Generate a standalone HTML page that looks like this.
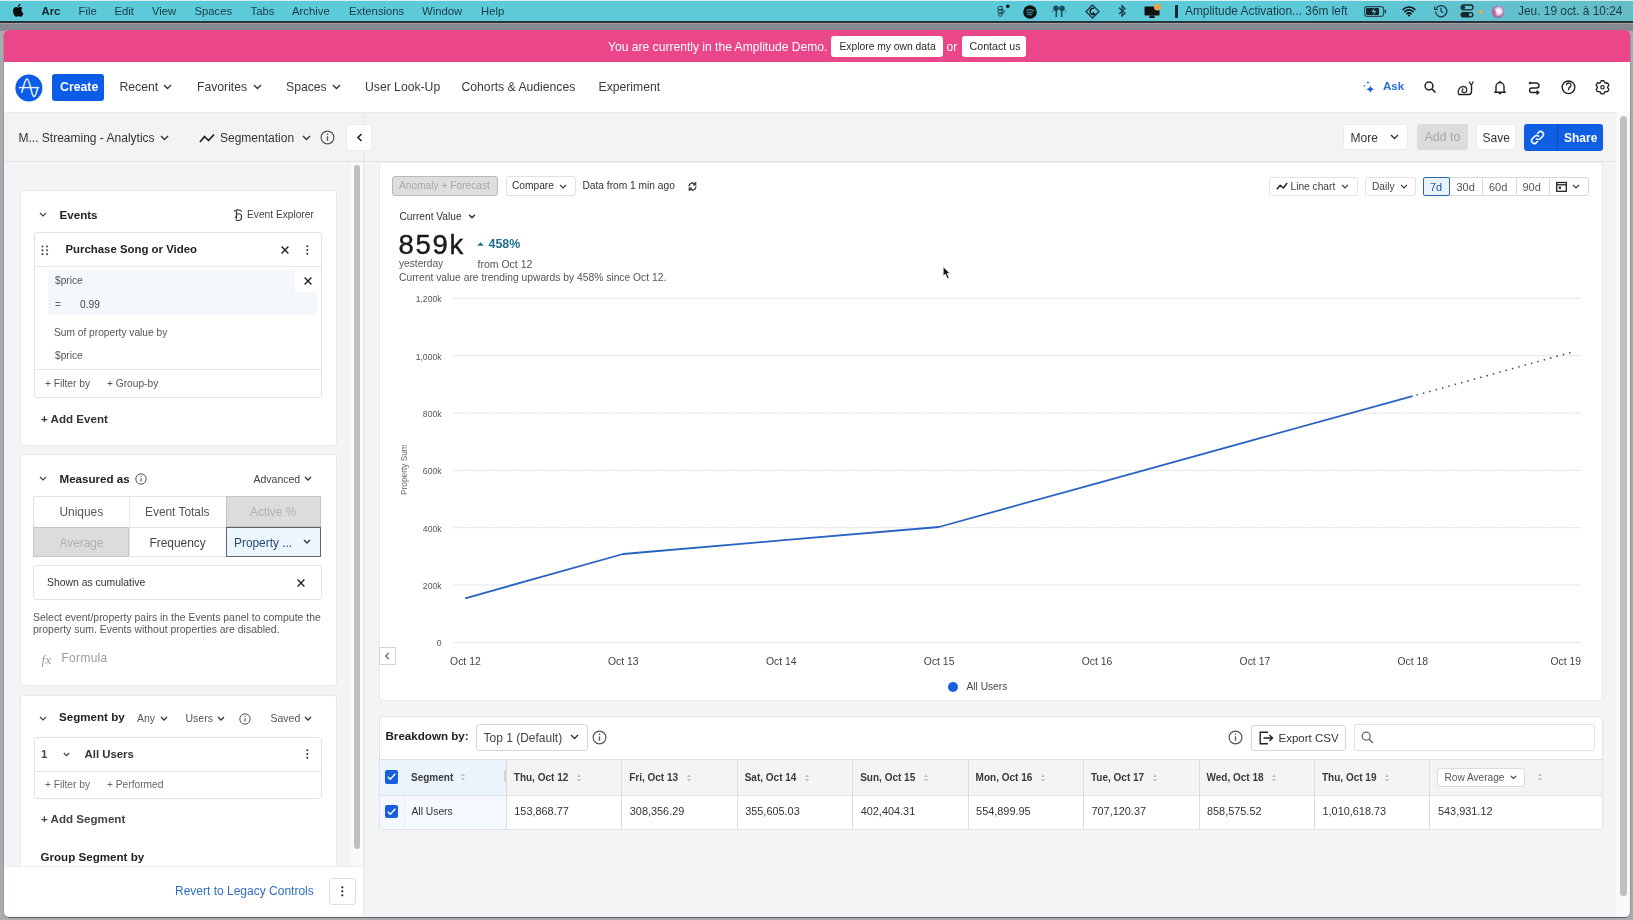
<!DOCTYPE html>
<html><head><meta charset="utf-8">
<style>
*{box-sizing:border-box;margin:0;padding:0}
html,body{will-change:transform;width:1633px;height:920px;overflow:hidden;background:#98989c;font-family:"Liberation Sans",sans-serif;color:#303030}
.a{position:absolute;white-space:nowrap;line-height:1}
svg{position:absolute;overflow:visible}
.mb{position:absolute;top:5px;font-size:11.3px;color:#1b3a45;line-height:12px;white-space:nowrap}
.nv{position:absolute;top:81px;font-size:12.2px;color:#3a3a3a;line-height:12px;white-space:nowrap}
.card{position:absolute;background:#fff;border:1px solid #e3e3e6;border-radius:3px}
.box{position:absolute;background:#fff;border:1px solid #dedee2;border-radius:3px}
.t10{font-size:10.2px;line-height:10px}
.t12{font-size:12px;line-height:12px}
</style></head><body>
<!-- menubar -->
<div style="position:absolute;left:0;top:0;width:1633px;height:22px;background:#5ccad9"></div>
<div style="position:absolute;left:0;top:0;width:1633px;height:1px;background:#d8eef1"></div><div style="position:absolute;left:1300px;top:1px;width:333px;height:20px;background:linear-gradient(90deg,rgba(102,188,197,0),#66bcc5)"></div>
<div style="position:absolute;left:0;top:21px;width:1633px;height:2px;background:#2a3438"></div>
<svg style="left:13px;top:4px" width="11" height="14" viewBox="0 0 13 16.5"><path fill="#0d0d0d" d="M10.6 8c0-1.9 1.6-2.8 1.6-2.8-.9-1.3-2.3-1.5-2.8-1.5-1.2-.1-2.3.7-2.9.7-.6 0-1.5-.7-2.5-.7C2.7 3.7 1.4 4.500 .7 5.800-.8 8.400.3 12.300 1.700 14.300c.7 1 1.500 2.100 2.600 2 1-.1 1.400-.7 2.700-.7 1.200 0 1.600.7 2.700.7 1.100 0 1.800-1 2.500-2 .8-1.100 1.100-2.200 1.100-2.300 0 0-2.100-.8-2.200-3.300zM8.600 2.400c.6-.7 1-1.600.9-2.600-.8 0-1.800.6-2.400 1.300-.5.600-1 1.600-.9 2.500.9.100 1.800-.4 2.400-1.200z" transform="scale(.93)"/></svg>
<div class="mb" style="left:41.5px;font-weight:bold;color:#15262c">Arc</div>
<div class="mb" style="left:78.5px">File</div>
<div class="mb" style="left:114.5px">Edit</div>
<div class="mb" style="left:152px">View</div>
<div class="mb" style="left:194.5px">Spaces</div>
<div class="mb" style="left:250.5px">Tabs</div>
<div class="mb" style="left:292px">Archive</div>
<div class="mb" style="left:349px">Extensions</div>
<div class="mb" style="left:422px">Window</div>
<div class="mb" style="left:481px">Help</div>
<!-- status icons -->
<svg style="left:997px;top:4px" width="14" height="14" viewBox="0 0 14 14"><path d="M2.500 2.500h2.500v3.300H2.500a1.650 1.650 0 0 1 0-3.300zM2.500 5.800h2.500v3.300H2.500a1.650 1.650 0 0 1 0-3.300zM2.500 9.100h2.500v1.700a1.700 1.700 0 1 1-2.500-1.700z" fill="none" stroke="#1b3a45" stroke-width="1"/><path d="M5 5.800h.7a1.650 1.650 0 0 1 0 3.300H5" fill="none" stroke="#1b3a45" stroke-width="1"/><circle cx="10.800" cy="2.300" r="1.700" fill="#0a0a0a"/></svg>
<svg style="left:1022.500px;top:4.500px" width="15" height="15" viewBox="0 0 15 15"><circle cx="7" cy="7" r="6.800" fill="#0d1114"/><path d="M3.300 5.200c2.500-.8 5.200-.6 7.800.7M3.700 7.500c2-.6 4.200-.4 6.200.5M4.200 9.700c1.600-.4 3.200-.3 4.600.4" stroke="#3f8a98" stroke-width="1.300" fill="none"/></svg>
<svg style="left:1050px;top:4px" width="18" height="14" viewBox="0 0 18 14"><circle cx="6" cy="4.200" r="2.800" fill="#1b4e5c"/><circle cx="12" cy="4.200" r="2.800" fill="#1b4e5c"/><path d="M6.300 6v7M11.700 6v7" stroke="#1b4e5c" stroke-width="1.600"/><path d="M3.300 5.500L1 7.200l2.300 1M14.700 5.500L17 7.200l-2.300 1" fill="#4a8e9c"/></svg>
<svg style="left:1085px;top:4px" width="15" height="15" viewBox="0 0 15 15"><path d="M7.500 1L14 7.500 7.500 14 1 7.500z" fill="none" stroke="#1b3a45" stroke-width="1.300"/><path d="M9.300 4.300A3.200 3.200 0 1 0 9.600 10.300L8 8.500" fill="none" stroke="#0a0a0a" stroke-width="1.400"/></svg>
<svg style="left:1117px;top:4px" width="10" height="14" viewBox="0 0 10 14"><path d="M2 3.800l6 5.500-3 2.800V1.800l3 2.800-6 5.500" fill="none" stroke="#1b3a45" stroke-width="1.3"/></svg>
<svg style="left:1144px;top:3px" width="18" height="16" viewBox="0 0 18 16"><rect x="0.5" y="3.5" width="15" height="9" rx="1" fill="#111"/><path d="M6 12.500h4l1 2.500H5z" fill="#111"/><circle cx="13.500" cy="4" r="3.600" fill="#e6a64b"/></svg>
<div style="position:absolute;left:1175px;top:5px;width:3px;height:13px;background:#15262c;border-radius:1px"></div>
<div class="mb" style="left:1185px;font-size:11.9px">Amplitude Activation... 36m left</div>
<svg style="left:1364px;top:6px" width="23" height="11" viewBox="0 0 23 11"><rect x="0.600" y="0.600" width="19" height="9.800" rx="2.500" fill="none" stroke="#2a4a55" stroke-width="1.100"/><rect x="2" y="2" width="13" height="7" rx="1" fill="#15262c"/><rect x="20.500" y="3.500" width="1.600" height="4" rx=".8" fill="#2a4a55"/><path d="M10.500 1.800L7.500 6H10L9 9.500 12.500 5H10z" fill="#5ab8c4"/></svg>
<svg style="left:1402px;top:5px" width="14" height="12" viewBox="0 0 14 12"><path d="M1 4.500a8.500 8.500 0 0 1 12 0M3 6.700a5.500 5.500 0 0 1 8 0M5 8.800a2.700 2.700 0 0 1 4 0" fill="none" stroke="#101418" stroke-width="1.700" stroke-linecap="round"/><circle cx="7" cy="10.500" r="1.100" fill="#101418"/></svg>
<svg style="left:1434px;top:4px" width="14" height="14" viewBox="0 0 14 14"><path d="M2.300 4.500A5.600 5.600 0 1 1 1.600 7.500" fill="none" stroke="#1b3a45" stroke-width="1.300"/><path d="M.800 2.500v3h3" fill="none" stroke="#1b3a45" stroke-width="1.200"/><path d="M7 3.800V7.300l2.200 1.500" fill="none" stroke="#1b3a45" stroke-width="1.200"/></svg>
<svg style="left:1460px;top:4px" width="14" height="14" viewBox="0 0 14 14"><rect x="1" y="1" width="12" height="4.800" rx="2.400" fill="none" stroke="#15262c" stroke-width="1.300"/><circle cx="3.500" cy="3.400" r="1.600" fill="#15262c"/><rect x="0.500" y="8" width="13" height="5.500" rx="2.700" fill="#15262c"/><circle cx="10.500" cy="10.700" r="1.700" fill="#5ab8c4"/></svg>
<div style="position:absolute;left:1479px;top:10px;width:4px;height:4px;border-radius:2px;background:#e9a95a"></div>
<svg style="left:1490.500px;top:4.500px" width="14" height="14" viewBox="0 0 14 14"><defs><radialGradient id="sg" cx=".55" cy=".45" r=".6"><stop offset="0" stop-color="#ffffff"/><stop offset=".35" stop-color="#e8e8f8"/><stop offset=".7" stop-color="#c070b0"/><stop offset="1" stop-color="#4a78b8"/></radialGradient></defs><circle cx="7" cy="6.800" r="6.300" fill="url(#sg)"/><path d="M1.500 5q2-1 3.500 1.500T3 11" fill="#e0509a" opacity=".8"/></svg>
<div class="mb" style="left:1518px;font-size:11.9px">Jeu. 19 oct. à 10:24</div>
<style>
.xl{top:657.3px;font-size:10.4px;color:#444;line-height:10px}
.yl{font-size:8.6px;color:#555;line-height:8px}
.th{position:absolute;top:772.5px;display:flex;align-items:center;height:10px;font-size:10px;font-weight:bold;color:#3a3a3a;line-height:10px;white-space:nowrap}
.td{position:absolute;top:805.8px;font-size:10.9px;color:#333;line-height:10px;white-space:nowrap}
</style>
<!-- window -->
<div style="position:absolute;left:0;top:23px;width:1633px;height:897px;background:#a9abaf"></div>
<div style="position:absolute;left:0;top:23px;width:1633px;height:8px;background:#858a91"></div>
<div style="position:absolute;left:0;top:23px;width:1633px;height:1px;background:#a39fa3"></div>
<div style="position:absolute;left:3px;top:30px;width:1628px;height:888px;background:#95969a;border-radius:6px"></div>
<div style="position:absolute;left:8px;top:917px;width:1618px;height:1px;background:#5e5f63"></div>
<div style="position:absolute;left:4px;top:30px;width:1626px;height:886.5px;background:#f3f4f6;border-radius:5px;overflow:hidden">
  <div style="position:absolute;left:0;top:0;width:1626px;height:31.5px;background:#ea4689"></div>
  <div style="position:absolute;left:0;top:31.5px;width:1626px;height:50.5px;background:#fff"></div>
  <div style="position:absolute;left:0;top:82px;width:1626px;height:50px;background:#f3f3f4"></div>
  <div style="position:absolute;left:0;top:82px;width:1626px;height:1px;background:#ebebed"></div>
</div>
<!-- banner -->
<div class="a" style="left:608px;top:41.8px;font-size:12.1px;color:#fff;line-height:11px">You are currently in the Amplitude Demo.</div>
<div style="position:absolute;left:831px;top:36px;width:112px;height:21px;background:#fff;border-radius:3px"></div>
<div class="a" style="left:839.5px;top:41px;font-size:10.3px;color:#2a2a2a;line-height:11px">Explore my own data</div>
<div class="a" style="left:946.5px;top:41.8px;font-size:12px;color:#fff;line-height:11px">or</div>
<div style="position:absolute;left:962px;top:36px;width:64px;height:21px;background:#fff;border-radius:3px"></div>
<div class="a" style="left:969.5px;top:41px;font-size:10.7px;color:#2a2a2a;line-height:11px">Contact us</div>
<!-- nav -->
<svg style="left:14.5px;top:73.5px" width="28" height="28" viewBox="0 0 28 28"><circle cx="13.9" cy="14" r="13.5" fill="#0b5ce6"/><path d="M3.900 13.600H24.300" stroke="#e8f0ff" stroke-width="1.400"/><path d="M6.800 18.300C8.800 12 10 4.900 11.900 4.900 14 4.900 15.300 12.500 16.400 16.800 17.300 20.500 18.300 22.600 19.100 22.600 20.300 22.600 21.500 18.500 22.600 14.200" fill="none" stroke="#e8f0ff" stroke-width="1.500" stroke-linecap="round"/></svg>
<div style="position:absolute;left:52px;top:74px;width:52px;height:27px;background:#0b5ce6;border-radius:3px"></div>
<div class="a" style="left:60px;top:81px;font-size:12.3px;font-weight:bold;color:#fff">Create</div>
<div class="nv" style="left:119.5px">Recent</div>
<div class="nv" style="left:197px">Favorites</div>
<div class="nv" style="left:286px">Spaces</div>
<div class="nv" style="left:365px">User Look-Up</div>
<div class="nv" style="left:461.5px">Cohorts &amp; Audiences</div>
<div class="nv" style="left:598.5px">Experiment</div>
<svg style="left:163px;top:84px" width="9" height="6" viewBox="0 0 9 6"><path d="M1 1l3.500 3.500L8 1" fill="none" stroke="#333" stroke-width="1.400"/></svg>
<svg style="left:253px;top:84px" width="9" height="6" viewBox="0 0 9 6"><path d="M1 1l3.500 3.500L8 1" fill="none" stroke="#333" stroke-width="1.400"/></svg>
<svg style="left:332px;top:84px" width="9" height="6" viewBox="0 0 9 6"><path d="M1 1l3.500 3.500L8 1" fill="none" stroke="#333" stroke-width="1.400"/></svg>
<!-- right nav icons -->
<svg style="left:1361px;top:80px" width="15" height="15" viewBox="0 0 15 15"><path d="M9.300 5c.4 2.600 1.200 3.500 4.300 4.200-3.100.7-3.900 1.600-4.300 4.300-.4-2.700-1.200-3.600-4.300-4.300C8.100 8.500 8.900 7.600 9.300 5z" fill="#1a5fe0"/><path d="M7 .8c.2 1.200.6 1.600 1.800 1.800C7.600 2.800 7.200 3.200 7 4.400 6.800 3.200 6.400 2.800 5.200 2.600 6.400 2.400 6.800 2 7 .8z" fill="#2d6bd8"/><path d="M3.200 4.200c.2 1.100.5 1.400 1.600 1.600-1.100.2-1.400.5-1.600 1.600C3 6.300 2.700 6 1.600 5.800 2.700 5.600 3 5.300 3.200 4.200z" fill="#2d6bd8"/></svg>
<div class="a" style="left:1383px;top:80.3px;font-size:11.6px;color:#2f6fd2;font-weight:bold">Ask</div>
<svg style="left:1424px;top:81.2px" width="13" height="13" viewBox="0 0 13 13"><circle cx="5" cy="5" r="3.900" fill="none" stroke="#222" stroke-width="1.500"/><path d="M8 8l3.500 3.500" stroke="#222" stroke-width="1.600"/></svg>
<svg style="left:1457px;top:80px" width="17" height="16" viewBox="0 0 17 16"><path d="M1.200 14.500H11.500Q14.500 14.500 14.500 11.500V5.300" fill="none" stroke="#222" stroke-width="1.400"/><path d="M14.300 5.300L12 1.500M14.300 5.300L16.300 1.500" fill="none" stroke="#222" stroke-width="1.200"/><path d="M1.300 14C.6 10.500 2.500 6.500 6 6.500c2.500 0 3.800 1.800 3.800 3.500 0 1.500-1.100 2.600-2.500 2.600-1.300 0-2.200-.9-2.200-2 0-.9.600-1.600 1.400-1.600" fill="none" stroke="#333" stroke-width="1.300"/></svg>
<svg style="left:1494px;top:80px" width="12" height="15" viewBox="0 0 12 15"><path d="M2 11V6.500a4 4 0 0 1 8 0V11l1.200 1.200H.8z" fill="none" stroke="#222" stroke-width="1.400" stroke-linejoin="round"/><path d="M4.800 13.600h2.400" stroke="#222" stroke-width="1.400"/><path d="M6 .8v1.500" stroke="#222" stroke-width="1.200"/></svg>
<svg style="left:1528px;top:81px" width="13" height="14" viewBox="0 0 13 14"><path d="M2 2H8.500A2.500 2.500 0 0 1 8.500 7H3.800A2.250 2.250 0 0 0 3.800 11.500H10.300" fill="none" stroke="#222" stroke-width="1.400"/><circle cx="2" cy="2" r="1.200" fill="#222"/><path d="M8.600 9.600L10.600 11.500 8.600 13.400" fill="none" stroke="#222" stroke-width="1.500"/></svg>
<svg style="left:1560.500px;top:80.200px" width="15" height="15" viewBox="0 0 15 15"><circle cx="7.500" cy="7.300" r="6.300" fill="none" stroke="#222" stroke-width="1.350"/><path d="M5.300 5.300a2.300 2.300 0 1 1 3.200 2.100c-.7.400-.9.900-.9 1.600v1.200" fill="none" stroke="#222" stroke-width="1.300"/></svg>
<svg style="left:1594.500px;top:80.200px" width="15" height="15" viewBox="0 0 15 15"><path d="M5.00 2.97 L6.22 0.72 L8.78 0.72 L10.00 2.97 L12.56 2.90 L13.83 5.12 L12.50 7.30 L13.83 9.48 L12.56 11.70 L10.00 11.63 L8.78 13.88 L6.22 13.88 L5.00 11.63 L2.44 11.70 L1.17 9.48 L2.50 7.30 L1.17 5.12 L2.44 2.90Z" fill="none" stroke="#222" stroke-width="1.350" stroke-linejoin="round"/><circle cx="7.500" cy="7.300" r="1.700" fill="none" stroke="#222" stroke-width="1.200"/></svg>
<!-- left scroll strip -->
<div style="position:absolute;left:351px;top:162px;width:12px;height:704px;background:#fafafa"></div>
<div style="position:absolute;left:353.5px;top:164.5px;width:6.5px;height:684px;background:#bfc0c1;border-radius:3.500px"></div>
<div style="position:absolute;left:363px;top:112px;width:2px;height:804px;background:#ececee"></div>
<!-- toolbar -->
<div style="position:absolute;left:4px;top:161px;width:1612px;height:1px;background:#e4e4e6"></div>
<div class="a t12" style="left:18.5px;top:132px;color:#333">M... Streaming - Analytics</div>
<svg style="left:160px;top:135px" width="9" height="6" viewBox="0 0 9 6"><path d="M1 1l3.500 3.500L8 1" fill="none" stroke="#333" stroke-width="1.400"/></svg>
<svg style="left:199px;top:133px" width="16" height="10" viewBox="0 0 16 10"><path d="M1 9l4.500-5.500 4 4L15 1.500" fill="none" stroke="#222" stroke-width="1.700" stroke-linejoin="round"/></svg>
<div class="a t12" style="left:220px;top:132px;color:#333">Segmentation</div>
<svg style="left:302px;top:135px" width="9" height="6" viewBox="0 0 9 6"><path d="M1 1l3.500 3.500L8 1" fill="none" stroke="#333" stroke-width="1.400"/></svg>
<svg style="left:319.5px;top:129.5px" width="15" height="15" viewBox="0 0 15 15"><circle cx="7.500" cy="7.500" r="6.400" fill="none" stroke="#555" stroke-width="1.200"/><path d="M7.500 6.300v4.500" stroke="#555" stroke-width="1.300"/><circle cx="7.500" cy="4.300" r=".8" fill="#555"/></svg>
<div style="position:absolute;left:347px;top:125px;width:24px;height:25px;background:#fff;border-radius:2px;box-shadow:0 0 0 1px #ececee"></div>
<svg style="left:355.5px;top:133px" width="7" height="9" viewBox="0 0 7 9"><path d="M5.500 1L2 4.500 5.500 8" fill="none" stroke="#222" stroke-width="1.600"/></svg>
<!-- events card -->
<div class="card" style="left:19.5px;top:190px;width:317px;height:256px;border-color:#e8e8ea"></div>
<svg style="left:38.5px;top:211.5px" width="8" height="5" viewBox="0 0 8 5"><path d="M1 1l3 3 3-3" fill="none" stroke="#444" stroke-width="1.200"/></svg>
<div class="a" style="left:59.5px;top:209px;font-size:11.6px;font-weight:bold;color:#222">Events</div>
<svg style="left:231.5px;top:207.5px" width="12" height="13" viewBox="0 0 12 13"><path d="M2 3.500a4.500 3 0 0 1 8 0" fill="none" stroke="#333" stroke-width="1.100"/><path d="M4.500 2.500v7.500L3 8.800M4.500 6h3a2 2 0 0 1 2 2v1.500a3 3 0 0 1-3 3h-1a2 2 0 0 1-1.800-1.100" fill="none" stroke="#333" stroke-width="1.200"/></svg>
<div class="a t10" style="left:247px;top:209.5px;color:#444">Event Explorer</div>
<!-- event box -->
<div class="box" style="left:33.5px;top:231.5px;width:288px;height:166px;border-color:#e2e2e5"></div>
<div style="position:absolute;left:34px;top:266px;width:287px;height:1px;background:#e6e6e8"></div>
<svg style="left:41px;top:244.5px" width="8" height="11" viewBox="0 0 8 11"><g fill="#555"><circle cx="1.500" cy="1.500" r="1.100"/><circle cx="6" cy="1.500" r="1.100"/><circle cx="1.500" cy="5.300" r="1.100"/><circle cx="6" cy="5.300" r="1.100"/><circle cx="1.500" cy="9.200" r="1.100"/><circle cx="6" cy="9.200" r="1.100"/></g></svg>
<div class="a" style="left:65.5px;top:243.5px;font-size:11.4px;font-weight:bold;color:#222">Purchase Song or Video</div>
<svg style="left:281px;top:245.5px" width="8" height="8" viewBox="0 0 8 8"><path d="M.6.6l6.800 6.800M7.400.6L.6 7.400" stroke="#222" stroke-width="1.400"/></svg>
<svg style="left:306px;top:244.5px" width="3" height="10" viewBox="0 0 3 10"><g fill="#333"><circle cx="1.300" cy="1.200" r="1.050"/><circle cx="1.300" cy="5" r="1.050"/><circle cx="1.300" cy="8.800" r="1.050"/></g></svg>
<div style="position:absolute;left:47.5px;top:270px;width:247px;height:22px;background:#f4f7fc"></div>
<div style="position:absolute;left:47.5px;top:292px;width:269px;height:23px;background:#f4f7fc"></div>
<div class="a t10" style="left:55px;top:276px;color:#555">$price</div>
<svg style="left:303.5px;top:277px" width="8" height="8" viewBox="0 0 8 8"><path d="M.6.6l6.800 6.800M7.400.6L.6 7.400" stroke="#222" stroke-width="1.400"/></svg>
<div class="a t10" style="left:55px;top:299.5px;color:#666">=</div>
<div class="a t10" style="left:80px;top:299.5px;color:#444">0.99</div>
<div class="a t10" style="left:54px;top:328px;color:#555">Sum of property value by</div>
<div class="a t10" style="left:55px;top:350.5px;color:#555">$price</div>
<div style="position:absolute;left:34px;top:369px;width:287px;height:1px;background:#e6e6e8"></div>
<div class="a t10" style="left:45px;top:378.5px;color:#555">+ Filter by</div>
<div class="a t10" style="left:107px;top:378.5px;color:#555">+ Group-by</div>
<div class="a" style="left:41px;top:412.5px;font-size:11.6px;font-weight:bold;color:#333">+ Add Event</div>
<!-- measured card -->
<div class="card" style="left:19.5px;top:454px;width:317px;height:232px;border-color:#e8e8ea"></div>
<svg style="left:39px;top:475.5px" width="8" height="5" viewBox="0 0 8 5"><path d="M1 1l3 3 3-3" fill="none" stroke="#444" stroke-width="1.200"/></svg>
<div class="a" style="left:59.5px;top:472.5px;font-size:11.6px;font-weight:bold;color:#222">Measured as</div>
<svg style="left:134.5px;top:473px" width="12" height="12" viewBox="0 0 12 12"><circle cx="6" cy="6" r="5.200" fill="none" stroke="#555" stroke-width="1"/><path d="M6 5v3.800" stroke="#555" stroke-width="1.100"/><circle cx="6" cy="3.300" r=".7" fill="#555"/></svg>
<div class="a t10" style="left:253.5px;top:473.5px;font-size:10.5px;color:#444">Advanced</div>
<svg style="left:304px;top:476px" width="8" height="5" viewBox="0 0 8 5"><path d="M1 1l3 3 3-3" fill="none" stroke="#333" stroke-width="1.300"/></svg>
<!-- grid -->
<div style="position:absolute;left:33px;top:496px;width:288px;height:61px;border:1px solid #e3e3e6"></div>
<div style="position:absolute;left:33px;top:526.5px;width:288px;height:1px;background:#e6e6e8"></div>
<div style="position:absolute;left:128.5px;top:496px;width:1px;height:61px;background:#e6e6e8"></div>
<div style="position:absolute;left:226px;top:496px;width:95px;height:31px;background:#dcdcde;border:1px solid #c5c5c8"></div>
<div style="position:absolute;left:33px;top:526.5px;width:96px;height:30.5px;background:#dcdcde;border:1px solid #c5c5c8"></div>
<div style="position:absolute;left:226px;top:527px;width:95px;height:30px;background:#eef6fd;border:1px solid #5d646c"></div>
<div class="a t12" style="left:59.5px;top:505.5px;font-size:11.9px;color:#555">Uniques</div>
<div class="a t12" style="left:145px;top:505.5px;font-size:11.9px;color:#555">Event Totals</div>
<div class="a t12" style="left:250px;top:505.5px;font-size:11.9px;color:#b0b0b2">Active %</div>
<div class="a t12" style="left:59.5px;top:536.5px;font-size:11.9px;color:#b0b0b2">Average</div>
<div class="a t12" style="left:149.5px;top:536.5px;font-size:11.9px;color:#444">Frequency</div>
<div class="a t12" style="left:234px;top:536.5px;font-size:11.9px;color:#234a78">Property ...</div>
<svg style="left:302.5px;top:539px" width="8" height="6" viewBox="0 0 8 6"><path d="M1 1l3 3 3-3" fill="none" stroke="#2b3a4c" stroke-width="1.400"/></svg>
<div class="box" style="left:33px;top:565px;width:288.5px;height:34.5px;border-color:#e4e4e7"></div>
<div class="a t10" style="left:47px;top:578.3px;font-size:10.4px;color:#333">Shown as cumulative</div>
<svg style="left:296.5px;top:579px" width="8" height="8" viewBox="0 0 8 8"><path d="M.6.6l6.800 6.800M7.400.6L.6 7.400" stroke="#222" stroke-width="1.400"/></svg>
<div class="a t10" style="left:33px;top:611.8px;font-size:10.45px;color:#555;line-height:11.7px">Select event/property pairs in the Events panel to compute the<br>property sum. Events without properties are disabled.</div>
<div class="a" style="left:41.5px;top:652.5px;font-size:13px;font-style:italic;color:#999;font-family:'Liberation Serif',serif;letter-spacing:.5px">fx</div>
<div class="a" style="left:61.5px;top:653px;font-size:11.9px;letter-spacing:.35px;color:#9a9a9a">Formula</div>
<!-- segment card -->
<div class="card" style="left:19.5px;top:695px;width:317px;height:200px;border-color:#e8e8ea"></div>
<svg style="left:38.5px;top:716px" width="8" height="5" viewBox="0 0 8 5"><path d="M1 1l3 3 3-3" fill="none" stroke="#444" stroke-width="1.200"/></svg>
<div class="a" style="left:59px;top:711.2px;font-size:11.6px;font-weight:bold;color:#222">Segment by</div>
<div class="a t10" style="left:137px;top:713px;font-size:10.5px;color:#555">Any</div>
<svg style="left:160px;top:716px" width="8" height="5" viewBox="0 0 8 5"><path d="M1 1l3 3 3-3" fill="none" stroke="#333" stroke-width="1.300"/></svg>
<div class="a t10" style="left:185.5px;top:713px;font-size:10.5px;color:#555">Users</div>
<svg style="left:216.5px;top:716px" width="8" height="5" viewBox="0 0 8 5"><path d="M1 1l3 3 3-3" fill="none" stroke="#333" stroke-width="1.300"/></svg>
<svg style="left:239px;top:713px" width="12" height="12" viewBox="0 0 12 12"><circle cx="6" cy="6" r="5.200" fill="none" stroke="#555" stroke-width="1"/><path d="M6 5v3.800" stroke="#555" stroke-width="1.100"/><circle cx="6" cy="3.300" r=".7" fill="#555"/></svg>
<div class="a t10" style="left:270.5px;top:713px;font-size:10.5px;color:#555">Saved</div>
<svg style="left:304px;top:716px" width="8" height="5" viewBox="0 0 8 5"><path d="M1 1l3 3 3-3" fill="none" stroke="#333" stroke-width="1.300"/></svg>
<div class="box" style="left:33.5px;top:736.5px;width:288px;height:62.5px;border-color:#e2e2e5"></div>
<div style="position:absolute;left:34px;top:771px;width:287px;height:1px;background:#e6e6e8"></div>
<div class="a" style="left:41px;top:748.5px;font-size:11.5px;font-weight:bold;color:#444">1</div>
<svg style="left:63px;top:752px" width="7" height="5" viewBox="0 0 7 5"><path d="M.8 1l2.700 2.700L6.200 1" fill="none" stroke="#444" stroke-width="1.200"/></svg>
<div class="a" style="left:84.5px;top:748.5px;font-size:11.4px;font-weight:bold;color:#333">All Users</div>
<svg style="left:306px;top:748.5px" width="3" height="10" viewBox="0 0 3 10"><g fill="#333"><circle cx="1.300" cy="1.200" r="1.050"/><circle cx="1.300" cy="5" r="1.050"/><circle cx="1.300" cy="8.800" r="1.050"/></g></svg>
<div class="a t10" style="left:45px;top:779.5px;color:#666">+ Filter by</div>
<div class="a t10" style="left:107px;top:779.5px;color:#666">+ Performed</div>
<div class="a" style="left:41px;top:813px;font-size:11.6px;font-weight:bold;color:#444">+ Add Segment</div>
<div class="a" style="left:40.5px;top:851px;font-size:11.6px;font-weight:bold;color:#222">Group Segment by</div>
<!-- bottom bar -->
<div style="position:absolute;left:4px;top:866px;width:359px;height:50px;background:#fff;border-top:1px solid #ededef;border-bottom-left-radius:5px"></div>
<div class="a t12" style="left:175px;top:885px;color:#2f6fc2">Revert to Legacy Controls</div>
<div class="box" style="left:329px;top:878px;width:27px;height:27px;border-color:#dedee2"></div>
<svg style="left:341px;top:886px" width="3" height="11" viewBox="0 0 3 11"><g fill="#222"><circle cx="1.300" cy="1.300" r="1.100"/><circle cx="1.300" cy="5.300" r="1.100"/><circle cx="1.300" cy="9.300" r="1.100"/></g></svg>
<!-- main toolbar buttons -->
<div class="box" style="left:1343px;top:124px;width:65px;height:26px;border-color:#ececee"></div>
<div class="a t12" style="left:1350.5px;top:131.5px;color:#333">More</div>
<svg style="left:1389.5px;top:134px" width="9" height="6" viewBox="0 0 9 6"><path d="M1 1l3.500 3.500L8 1" fill="none" stroke="#333" stroke-width="1.400"/></svg>
<div style="position:absolute;left:1417px;top:124px;width:51px;height:26px;background:#dcdcde;border-radius:3px"></div>
<div class="a t12" style="left:1424.5px;top:131.2px;font-size:12.4px;color:#a5a5a8">Add to</div>
<div class="box" style="left:1476px;top:124px;width:40px;height:26px;border-color:#ececee"></div>
<div class="a t12" style="left:1482.5px;top:131.5px;color:#333">Save</div>
<div style="position:absolute;left:1523.5px;top:124px;width:79.5px;height:26.5px;background:#0f5fe5;border-radius:3px"></div>
<div style="position:absolute;left:1556.5px;top:124px;width:1.500px;height:26.5px;background:#0a4ab8"></div>
<svg style="left:1530px;top:130px" width="15" height="15" viewBox="0 0 15 15"><path d="M6.300 8.700a2.800 2.800 0 0 0 4 0l2.300-2.300a2.800 2.800 0 0 0-4-4L7.500 3.500M8.700 6.300a2.800 2.800 0 0 0-4 0L2.400 8.600a2.800 2.800 0 0 0 4 4l1.100-1.100" fill="none" stroke="#fff" stroke-width="1.500" stroke-linecap="round"/></svg>
<div class="a" style="left:1564px;top:131.5px;font-size:12px;font-weight:bold;color:#fff">Share</div>
<!-- right scroll strip -->
<div style="position:absolute;left:1616px;top:112px;width:13px;height:804px;background:#fafafa;border-bottom-right-radius:5px"></div>
<div style="position:absolute;left:1620px;top:116px;width:7px;height:780px;background:#bfc0c1;border-radius:3.500px"></div>
<!-- chart card -->
<div class="card" style="left:378.5px;top:161.5px;width:1224px;height:539px;background:#fff;border-color:#e9e9eb"></div>
<div style="position:absolute;left:391.5px;top:176px;width:106.5px;height:20px;background:#dedee0;border:1px solid #b9b9bc;border-radius:3px"></div>
<div class="a t10" style="left:399px;top:181px;color:#a9a9ab">Anomaly + Forecast</div>
<div class="box" style="left:505.5px;top:176px;width:70px;height:20px;border-color:#e0e0e3"></div>
<div class="a t10" style="left:512px;top:181px;color:#333">Compare</div>
<svg style="left:558.5px;top:184px" width="8" height="5" viewBox="0 0 8 5"><path d="M1 .8l3 3 3-3" fill="none" stroke="#333" stroke-width="1.200"/></svg>
<div class="a t10" style="left:582.5px;top:181px;color:#333">Data from 1 min ago</div>
<svg style="left:686.5px;top:180.5px" width="11" height="11" viewBox="0 0 11 11"><path d="M2 5.500a3.500 3.500 0 0 1 6.200-2.200M9 5.500a3.500 3.500 0 0 1-6.200 2.200" fill="none" stroke="#333" stroke-width="1.300"/><path d="M8.700 1v2.800H6M2.300 10V7.200H5" fill="none" stroke="#333" stroke-width="1.200"/></svg>
<!-- right chart controls -->
<div class="box" style="left:1268.5px;top:176.5px;width:89px;height:19px;border-color:#e2e2e5"></div>
<svg style="left:1275.5px;top:181.5px" width="12" height="8" viewBox="0 0 12 8"><path d="M.8 7.200l3.500-4 3 2.800L11.200 1" fill="none" stroke="#222" stroke-width="1.400" stroke-linejoin="round"/></svg>
<div class="a t10" style="left:1290.5px;top:181.7px;color:#444">Line chart</div>
<svg style="left:1340.5px;top:183.5px" width="8" height="5" viewBox="0 0 8 5"><path d="M1 .8l3 3 3-3" fill="none" stroke="#333" stroke-width="1.200"/></svg>
<div class="box" style="left:1364.5px;top:176.5px;width:51px;height:19px;border-color:#e2e2e5"></div>
<div class="a t10" style="left:1372px;top:181.7px;color:#444">Daily</div>
<svg style="left:1399.5px;top:183.5px" width="8" height="5" viewBox="0 0 8 5"><path d="M1 .8l3 3 3-3" fill="none" stroke="#333" stroke-width="1.200"/></svg>
<div class="box" style="left:1422.5px;top:176.5px;width:166px;height:19px;border-color:#d9d9dc"></div>
<div style="position:absolute;left:1422.5px;top:176.5px;width:27.5px;height:19px;background:#eaf3fc;border:1.500px solid #2b64b4;border-radius:2px"></div>
<div style="position:absolute;left:1481.5px;top:177px;width:1px;height:18px;background:#d9d9dc"></div>
<div style="position:absolute;left:1515.5px;top:177px;width:1px;height:18px;background:#d9d9dc"></div>
<div style="position:absolute;left:1548.5px;top:177px;width:1px;height:18px;background:#d9d9dc"></div>
<div class="a t10" style="left:1430px;top:181.5px;font-size:10.9px;color:#1f5aa8">7d</div>
<div class="a t10" style="left:1456.5px;top:181.5px;font-size:11px;color:#555">30d</div>
<div class="a t10" style="left:1489px;top:181.5px;font-size:11px;color:#555">60d</div>
<div class="a t10" style="left:1522.5px;top:181.5px;font-size:11px;color:#555">90d</div>
<svg style="left:1555.5px;top:180.5px" width="11" height="11" viewBox="0 0 11 11"><rect x=".7" y="1.500" width="9.600" height="8.800" fill="none" stroke="#222" stroke-width="1.300"/><path d="M.7 3.800h9.600" stroke="#222" stroke-width="1.300"/><rect x="2.700" y="5.600" width="2.300" height="2.300" fill="#222"/></svg>
<svg style="left:1572px;top:183.5px" width="8" height="5" viewBox="0 0 8 5"><path d="M1 .8l3 3 3-3" fill="none" stroke="#333" stroke-width="1.200"/></svg>
<!-- current value -->
<div class="a t10" style="left:399.5px;top:212px;font-size:10.2px;color:#333">Current Value</div>
<svg style="left:467.5px;top:214px" width="8" height="5" viewBox="0 0 8 5"><path d="M1 .8l3 3 3-3" fill="none" stroke="#222" stroke-width="1.300"/></svg>
<div class="a" style="left:398.5px;top:231px;font-size:27.5px;color:#1a1a1a;letter-spacing:1.7px;-webkit-text-stroke:0.4px #1a1a1a">859k</div>
<svg style="left:476.5px;top:242px" width="7" height="4" viewBox="0 0 7 4"><path d="M3.500 .2L6.800 3.800H.2z" fill="#1c6d8c"/></svg>
<div class="a" style="left:488.5px;top:238px;font-size:12.4px;font-weight:bold;color:#1c6d8c">458%</div>
<div class="a t10" style="left:399px;top:259px;color:#555">yesterday</div>
<div class="a t10" style="left:477.5px;top:258.5px;font-size:10.5px;color:#555">from Oct 12</div>
<div class="a t10" style="left:399px;top:273px;color:#555;font-size:10.3px">Current value are trending upwards by 458% since Oct 12.</div>
<!-- chart -->
<div class="a" style="left:399.5px;top:495px;font-size:8.3px;color:#666;transform:rotate(-90deg);transform-origin:0 0">Property Sum</div>
<div style="position:absolute;left:378.5px;top:646.5px;width:17.5px;height:18px;background:#fff;border:1px solid #d5d5d8"></div>
<svg style="left:384px;top:651.5px" width="6" height="8" viewBox="0 0 6 8"><path d="M4.800 .8L1.600 4l3.200 3.200" fill="none" stroke="#555" stroke-width="1.100"/></svg>
<div style="position:absolute;left:947.8px;top:682px;width:10px;height:10px;border-radius:5px;background:#1a5ee0"></div>
<div class="a t10" style="left:966.5px;top:682px;color:#444">All Users</div>
<svg style="left:0;top:0" width="1633" height="920">
<line x1="453.5" y1="642.4" x2="1581" y2="642.4" stroke="#d9d9d9" stroke-width="1" stroke-dasharray="2 1"/>
<line x1="453.5" y1="585.0" x2="1581" y2="585.0" stroke="#d9d9d9" stroke-width="1" stroke-dasharray="2 1"/>
<line x1="453.5" y1="527.7" x2="1581" y2="527.7" stroke="#d9d9d9" stroke-width="1" stroke-dasharray="2 1"/>
<line x1="453.5" y1="470.3" x2="1581" y2="470.3" stroke="#d9d9d9" stroke-width="1" stroke-dasharray="2 1"/>
<line x1="453.5" y1="413.0" x2="1581" y2="413.0" stroke="#d9d9d9" stroke-width="1" stroke-dasharray="2 1"/>
<line x1="453.5" y1="355.6" x2="1581" y2="355.6" stroke="#d9d9d9" stroke-width="1" stroke-dasharray="2 1"/>
<line x1="453.5" y1="298.3" x2="1581" y2="298.3" stroke="#d9d9d9" stroke-width="1" stroke-dasharray="2 1"/>
<polyline points="465.2,598.3 623.1,554.0 781.0,540.4 938.9,527.0 1096.8,483.3 1254.7,439.6 1412.6,396.2" fill="none" stroke="#2862c2" stroke-width="1.800" stroke-linejoin="round"/>
<line x1="1412.6" y1="396.2" x2="1570.5" y2="352.6" stroke="#34465a" stroke-width="1.500" stroke-dasharray="1.500 5.100" stroke-dashoffset="-4"/>
</svg>
<div class="a xl" style="left:450.1px">Oct 12</div>
<div class="a xl" style="left:608.0px">Oct 13</div>
<div class="a xl" style="left:765.9px">Oct 14</div>
<div class="a xl" style="left:923.8px">Oct 15</div>
<div class="a xl" style="left:1081.7px">Oct 16</div>
<div class="a xl" style="left:1239.6px">Oct 17</div>
<div class="a xl" style="left:1397.5px">Oct 18</div>
<div class="a xl" style="left:1550.5px">Oct 19</div>
<div class="a yl" style="right:1191.5px;top:639.3px">0</div>
<div class="a yl" style="right:1191.5px;top:581.9px">200k</div>
<div class="a yl" style="right:1191.5px;top:524.6px">400k</div>
<div class="a yl" style="right:1191.5px;top:467.2px">600k</div>
<div class="a yl" style="right:1191.5px;top:409.9px">800k</div>
<div class="a yl" style="right:1191.5px;top:352.5px">1,000k</div>
<div class="a yl" style="right:1191.5px;top:295.2px">1,200k</div>
<div class="card" style="left:378.5px;top:716px;width:1224px;height:113.5px;background:#fff;border-color:#e3e3e6"></div>
<div class="a" style="left:385.5px;top:730.2px;font-size:11.6px;font-weight:bold;color:#222">Breakdown by:</div>
<div class="box" style="left:475.5px;top:723.5px;width:112px;height:27px;border-color:#d8d8dc"></div>
<div class="a t12" style="left:483.5px;top:731.5px;color:#444">Top 1 (Default)</div>
<svg style="left:569.5px;top:734px" width="9" height="6" viewBox="0 0 9 6"><path d="M1 1l3.500 3.500L8 1" fill="none" stroke="#333" stroke-width="1.400"/></svg>
<svg style="left:592px;top:729.5px" width="15" height="15" viewBox="0 0 15 15"><circle cx="7.500" cy="7.500" r="6.400" fill="none" stroke="#555" stroke-width="1.200"/><path d="M7.500 6.300v4.500" stroke="#555" stroke-width="1.300"/><circle cx="7.500" cy="4.300" r=".8" fill="#555"/></svg>
<svg style="left:1227.5px;top:730px" width="15" height="15" viewBox="0 0 15 15"><circle cx="7.500" cy="7.500" r="6.400" fill="none" stroke="#555" stroke-width="1.200"/><path d="M7.500 6.300v4.500" stroke="#555" stroke-width="1.300"/><circle cx="7.500" cy="4.300" r=".8" fill="#555"/></svg>
<div class="box" style="left:1251px;top:724.5px;width:95px;height:26.5px;border-color:#d6d6da"></div>
<svg style="left:1259px;top:730.5px" width="15" height="14" viewBox="0 0 15 14"><path d="M9 1.200H1.200v11.600H9" fill="none" stroke="#222" stroke-width="1.400"/><path d="M4.500 7h9M10.500 4l3 3-3 3" fill="none" stroke="#222" stroke-width="1.400"/></svg>
<div class="a t12" style="left:1278.5px;top:732px;font-size:11.5px;color:#333">Export CSV</div>
<div class="box" style="left:1354px;top:724px;width:241px;height:27px;border-color:#e0e0e4"></div>
<svg style="left:1361px;top:730.5px" width="13" height="13" viewBox="0 0 13 13"><circle cx="5.200" cy="5.200" r="4" fill="none" stroke="#666" stroke-width="1.300"/><path d="M8.200 8.200l3.800 3.800" stroke="#666" stroke-width="1.400"/></svg>
<div style="position:absolute;left:379px;top:759px;width:1223px;height:1px;background:#dedee2"></div>
<div style="position:absolute;left:379.500px;top:760px;width:1222px;height:34.5px;background:#f4f4f5"></div>
<div style="position:absolute;left:379.500px;top:760px;width:127px;height:34.5px;background:#e9f4fd"></div>
<div style="position:absolute;left:379.500px;top:795.5px;width:127px;height:33.0px;background:#f3f9fe"></div>
<div style="position:absolute;left:379px;top:794.5px;width:1223px;height:1px;background:#e2e2e5"></div>
<div style="position:absolute;left:403.5px;top:760px;width:1px;height:69px;background:#e9eef3"></div>
<div style="position:absolute;left:505.8px;top:760px;width:1px;height:69px;background:#dcdcdf"></div>
<div style="position:absolute;left:621.2px;top:760px;width:1px;height:69px;background:#dcdcdf"></div>
<div style="position:absolute;left:736.7px;top:760px;width:1px;height:69px;background:#dcdcdf"></div>
<div style="position:absolute;left:852.2px;top:760px;width:1px;height:69px;background:#dcdcdf"></div>
<div style="position:absolute;left:967.6px;top:760px;width:1px;height:69px;background:#dcdcdf"></div>
<div style="position:absolute;left:1083.0px;top:760px;width:1px;height:69px;background:#dcdcdf"></div>
<div style="position:absolute;left:1198.5px;top:760px;width:1px;height:69px;background:#dcdcdf"></div>
<div style="position:absolute;left:1314.0px;top:760px;width:1px;height:69px;background:#dcdcdf"></div>
<div style="position:absolute;left:1429.4px;top:760px;width:1px;height:69px;background:#dcdcdf"></div>
<div style="position:absolute;left:384.8px;top:770px;width:13px;height:13.5px;background:#1a5ee0;border-radius:2px"></div>
<svg style="left:384.8px;top:770px" width="13" height="13" viewBox="0 0 13 13"><path d="M2.800 6.800l2.500 2.500 5-5.500" fill="none" stroke="#fff" stroke-width="1.400"/></svg>
<div style="position:absolute;left:384.8px;top:804.5px;width:13px;height:13.5px;background:#1a5ee0;border-radius:2px"></div>
<svg style="left:384.8px;top:804.5px" width="13" height="13" viewBox="0 0 13 13"><path d="M2.800 6.800l2.500 2.500 5-5.500" fill="none" stroke="#fff" stroke-width="1.400"/></svg>
<div class="th" style="left:411px">Segment</div>
<svg style="left:460px;top:772px" width="6" height="10" viewBox="0 0 6 10"><path d="M.8 4L3 1.600 5.200 4zM.8 6L3 8.400 5.200 6z" fill="#c2c2c4"/></svg>
<div style="position:absolute;left:504px;top:770px;width:1.500px;height:12px;background:#d3d3d6"></div>
<div class="td" style="left:411.5px;top:806.5px;font-size:10.3px">All Users</div>
<div class="th" style="left:513.8px">Thu, Oct 12<svg style="position:relative;left:7.5px;top:0px" width="6" height="10" viewBox="0 0 6 10"><path d="M.8 4L3 1.600 5.200 4zM.8 6L3 8.400 5.200 6z" fill="#c2c2c4"/></svg></div>
<div class="td" style="left:514.3px">153,868.77</div>
<div class="th" style="left:629.2px">Fri, Oct 13<svg style="position:relative;left:7.5px;top:0px" width="6" height="10" viewBox="0 0 6 10"><path d="M.8 4L3 1.600 5.200 4zM.8 6L3 8.400 5.200 6z" fill="#c2c2c4"/></svg></div>
<div class="td" style="left:629.8px">308,356.29</div>
<div class="th" style="left:744.7px">Sat, Oct 14<svg style="position:relative;left:7.5px;top:0px" width="6" height="10" viewBox="0 0 6 10"><path d="M.8 4L3 1.600 5.200 4zM.8 6L3 8.400 5.200 6z" fill="#c2c2c4"/></svg></div>
<div class="td" style="left:745.2px">355,605.03</div>
<div class="th" style="left:860.2px">Sun, Oct 15<svg style="position:relative;left:7.5px;top:0px" width="6" height="10" viewBox="0 0 6 10"><path d="M.8 4L3 1.600 5.200 4zM.8 6L3 8.400 5.200 6z" fill="#c2c2c4"/></svg></div>
<div class="td" style="left:860.7px">402,404.31</div>
<div class="th" style="left:975.6px">Mon, Oct 16<svg style="position:relative;left:7.5px;top:0px" width="6" height="10" viewBox="0 0 6 10"><path d="M.8 4L3 1.600 5.200 4zM.8 6L3 8.400 5.200 6z" fill="#c2c2c4"/></svg></div>
<div class="td" style="left:976.1px">554,899.95</div>
<div class="th" style="left:1091.0px">Tue, Oct 17<svg style="position:relative;left:7.5px;top:0px" width="6" height="10" viewBox="0 0 6 10"><path d="M.8 4L3 1.600 5.200 4zM.8 6L3 8.400 5.200 6z" fill="#c2c2c4"/></svg></div>
<div class="td" style="left:1091.5px">707,120.37</div>
<div class="th" style="left:1206.5px">Wed, Oct 18<svg style="position:relative;left:7.5px;top:0px" width="6" height="10" viewBox="0 0 6 10"><path d="M.8 4L3 1.600 5.200 4zM.8 6L3 8.400 5.200 6z" fill="#c2c2c4"/></svg></div>
<div class="td" style="left:1207.0px">858,575.52</div>
<div class="th" style="left:1322.0px">Thu, Oct 19<svg style="position:relative;left:7.5px;top:0px" width="6" height="10" viewBox="0 0 6 10"><path d="M.8 4L3 1.600 5.200 4zM.8 6L3 8.400 5.200 6z" fill="#c2c2c4"/></svg></div>
<div class="td" style="left:1322.5px">1,010,618.73</div>
<div class="td" style="left:1438px">543,931.12</div>
<div class="box" style="left:1437px;top:768px;width:88px;height:18.5px;border-color:#dcdce0"></div>
<div class="a" style="left:1444.5px;top:772.5px;font-size:10.1px;color:#555">Row Average</div>
<svg style="left:1509.5px;top:775px" width="7" height="5" viewBox="0 0 7 5"><path d="M.8 .8l2.700 2.700L6.200 .8" fill="none" stroke="#444" stroke-width="1.200"/></svg>
<svg style="left:1537px;top:772px" width="6" height="10" viewBox="0 0 6 10"><path d="M.8 4L3 1.600 5.200 4zM.8 6L3 8.400 5.200 6z" fill="#c2c2c4"/></svg>
<svg style="left:942.300px;top:265.600px" width="11" height="15" viewBox="0 0 10 14"><path d="M1 .8V9.300L3 7.500 4.800 11.600 6.400 10.900 4.600 6.900H7.300Z" fill="#111" stroke="#fff" stroke-width=".6" stroke-linejoin="round"/></svg>
</body></html>
